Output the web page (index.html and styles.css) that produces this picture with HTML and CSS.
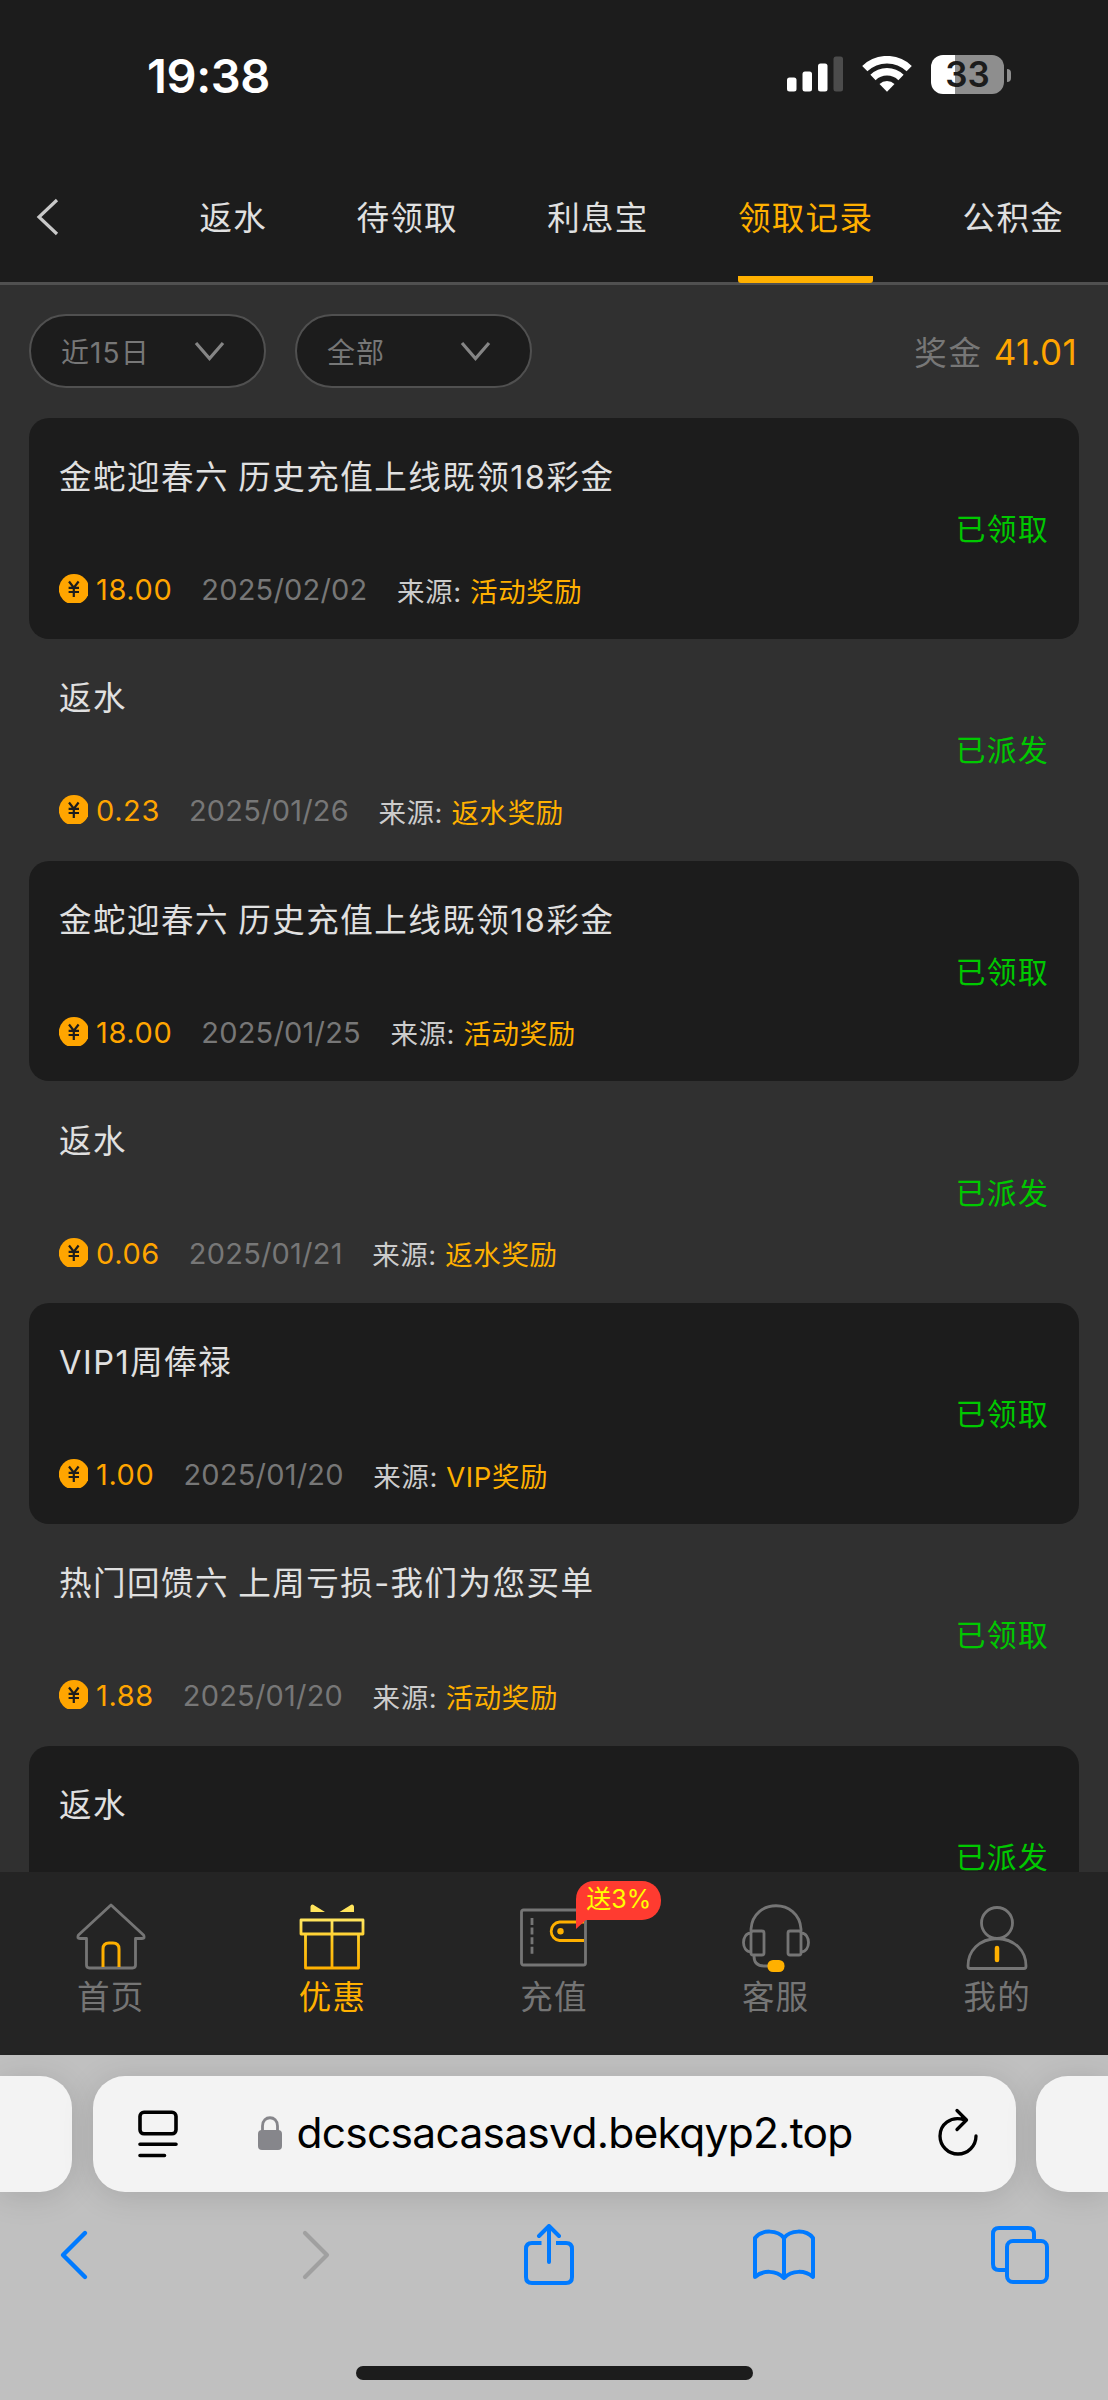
FILE: index.html
```html
<!DOCTYPE html>
<html lang="zh-CN">
<head>
<meta charset="utf-8">
<title>领取记录</title>
<link rel="stylesheet" href="styles.css">
</head>
<body>
<svg class="defs" width="0" height="0">
  <defs>
    <symbol id="coin" viewBox="0 0 29 29">
      <circle cx="15" cy="15.200" r="15.200" fill="#ffa500"/>
      <path d="M10 7.500l4.800 6.200L19.600 7.500M14.800 13.500v9.500M9.600 13.800h10.400M9.600 18h10.400" fill="none" stroke="#1c1c1c" stroke-width="2.200"/>
    </symbol>
    <linearGradient id="gold" x1="0" y1="0" x2="0" y2="68" gradientUnits="userSpaceOnUse">
      <stop offset=".3" stop-color="#ffe45c"/><stop offset=".6" stop-color="#ffc61a"/><stop offset="1" stop-color="#ffb000"/>
    </linearGradient>
  </defs>
</svg>

<header class="statusbar">
  <span class="clock">19:38</span>
  <div class="indicators">
    <svg width="58" height="36" viewBox="0 0 58 36">
      <g fill="#fff"><rect x="0" y="21.500" width="9.500" height="14" rx="2.500"/><rect x="15.500" y="15.500" width="9.500" height="20" rx="2.500"/><rect x="31" y="7.500" width="9.500" height="28" rx="2.500"/></g>
      <rect x="46.500" y="0.500" width="9.500" height="35" rx="2.500" fill="#4c4c4c"/>
    </svg>
    <svg class="wifi" width="50" height="36" viewBox="0 0 50 36">
      <g fill="none" stroke="#fff" stroke-width="7.500"><path d="M2.800 12.600A32 32 0 0 1 47.200 12.600"/><path d="M11 21.500A20 20 0 0 1 39 21.500"/></g>
      <path d="M17.500 28A11 11 0 0 1 32.500 28L25 35.800Z" fill="#fff"/>
    </svg>
    <div class="battery">33</div>
    <span class="battery-tip"></span>
  </div>
</header>

<nav class="tabs">
  <svg class="back" width="23" height="38" viewBox="0 0 23 38"><path d="M21 2L3 19l18 17" fill="none" stroke="#c8c8c8" stroke-width="3.200"/></svg>
  <span class="tab">返水</span>
  <span class="tab">待领取</span>
  <span class="tab">利息宝</span>
  <span class="tab active">领取记录</span>
  <span class="tab">公积金</span>
</nav>

<main class="records">
  <div class="filters">
    <div class="select"><span>近15日</span><svg width="31" height="21" viewBox="0 0 31 21"><path d="M2 2l13.500 15.500L29 2" fill="none" stroke="#858585" stroke-width="3.200"/></svg></div>
    <div class="select"><span>全部</span><svg width="31" height="21" viewBox="0 0 31 21"><path d="M2 2l13.500 15.500L29 2" fill="none" stroke="#858585" stroke-width="3.200"/></svg></div>
    <div class="total">奖金<b>41.01</b></div>
  </div>

  <article class="record dark">
    <h2>金蛇迎春六 历史充值上线既领18彩金</h2><span class="state">已领取</span>
    <div class="meta"><svg class="coin"><use href="#coin"/></svg><span class="amount">18.00</span><time>2025/02/02</time><span class="source">来源: <em>活动奖励</em></span></div>
  </article>
  <article class="record">
    <h2>返水</h2><span class="state">已派发</span>
    <div class="meta"><svg class="coin"><use href="#coin"/></svg><span class="amount">0.23</span><time>2025/01/26</time><span class="source">来源: <em>返水奖励</em></span></div>
  </article>
  <article class="record dark">
    <h2>金蛇迎春六 历史充值上线既领18彩金</h2><span class="state">已领取</span>
    <div class="meta"><svg class="coin"><use href="#coin"/></svg><span class="amount">18.00</span><time>2025/01/25</time><span class="source">来源: <em>活动奖励</em></span></div>
  </article>
  <article class="record">
    <h2>返水</h2><span class="state">已派发</span>
    <div class="meta"><svg class="coin"><use href="#coin"/></svg><span class="amount">0.06</span><time>2025/01/21</time><span class="source">来源: <em>返水奖励</em></span></div>
  </article>
  <article class="record dark">
    <h2>VIP1周俸禄</h2><span class="state">已领取</span>
    <div class="meta"><svg class="coin"><use href="#coin"/></svg><span class="amount">1.00</span><time>2025/01/20</time><span class="source">来源: <em>VIP奖励</em></span></div>
  </article>
  <article class="record">
    <h2>热门回馈六 上周亏损-我们为您买单</h2><span class="state">已领取</span>
    <div class="meta"><svg class="coin"><use href="#coin"/></svg><span class="amount">1.88</span><time>2025/01/20</time><span class="source">来源: <em>活动奖励</em></span></div>
  </article>
  <article class="record dark">
    <h2>返水</h2><span class="state">已派发</span>
  </article>
</main>

<nav class="dock">
  <div class="dock-item">
    <svg width="72" height="72" viewBox="0 0 72 72" fill="none" stroke="#757575" stroke-width="2.800" stroke-linejoin="round">
      <path d="M36 3L68.500 33Q70.500 36.500 67 36.500H60.500V63Q60.500 66 57.500 66H14.500Q11.500 66 11.500 63V36.500H5Q1.500 36.500 3.500 33Z"/>
      <path d="M28 65V47Q28 41 34 41H38Q44 41 44 47V65" stroke="#ffb000" stroke-width="3"/>
    </svg><span>首页</span>
  </div>
  <div class="dock-item active">
    <svg width="72" height="72" viewBox="0 0 72 72" fill="none" stroke="url(#gold)" stroke-width="2.800" stroke-linejoin="round">
      <path d="M5 18H67V32H5ZM9.500 32V66H62.500V32M36 18V66"/>
      <path d="M14.500 10V4.500Q15.500 1 18.500 3.500L29 10ZM58 10V4.500Q57 1 54 3.500L43.500 10Z" fill="#ffe45c" stroke="none"/>
    </svg><span>优惠</span>
  </div>
  <div class="dock-item">
    <svg width="72" height="72" viewBox="0 0 72 72" fill="none" stroke="#757575" stroke-width="2.800">
      <rect x="3.500" y="8" width="64" height="55" rx="2"/>
      <path d="M14 16v37" stroke-dasharray="7 2.600"/>
      <path d="M66 20H41.500A9.300 9.300 0 0 0 41.500 38.500H66" stroke="#ffb000"/><circle cx="42.500" cy="29.300" r="3.200" fill="#ffb000" stroke="none"/>
    </svg><span>充值</span><i class="promo">送3%</i>
  </div>
  <div class="dock-item">
    <svg width="72" height="72" viewBox="0 0 72 72" fill="none" stroke="#757575" stroke-width="2.800">
      <path d="M11 29V27C13-4 59-4 61 27V29"/>
      <rect x="11" y="29" width="13" height="24" rx="2"/><rect x="48" y="29" width="13" height="24" rx="2"/>
      <path d="M11 31C1 31 1 50 11 50M61 31C71 31 71 50 61 50M14 54Q14 64 24 64H29"/>
      <rect x="27.500" y="58" width="17" height="12" rx="5.500" fill="#ffb000" stroke="none"/>
    </svg><span>客服</span>
  </div>
  <div class="dock-item">
    <svg width="72" height="72" viewBox="0 0 72 72" fill="none" stroke="#757575" stroke-width="2.800">
      <circle cx="36" cy="21" r="15.500"/>
      <path d="M36 36.500C18 37 7 49 7 64Q7 66.500 9 66.500H63Q65 66.500 65 64C65 49 54 37 36 36.500Z"/>
      <path d="M36 46v12" stroke="#ffb000" stroke-width="4.500" stroke-linecap="round"/>
    </svg><span>我的</span>
  </div>
</nav>

<footer class="browser">
  <div class="addresses">
    <div class="side left"></div>
    <div class="address">
      <svg width="40" height="48" viewBox="0 0 40 48" fill="none" stroke="#000" stroke-width="3.600" stroke-linecap="round"><rect x="2" y="2.300" width="36" height="21.500" rx="4"/><path d="M2 34.300h36M2 45.500h24.500"/></svg>
      <svg class="lock" width="24" height="34" viewBox="0 0 24 34"><path d="M4.500 16V10C4.500-1 19.500-1 19.500 10V16" fill="none" stroke="#86868b" stroke-width="2.800"/><rect y="14" width="24" height="20" rx="4" fill="#86868b"/></svg>
      <span class="url">dcscsacasasvd.bekqyp2.top</span>
      <svg class="reload" width="40" height="48" viewBox="0 0 40 48" fill="none" stroke="#000" stroke-width="3.300" stroke-linecap="round" stroke-linejoin="round"><path d="M26.500 11.800C12 7.500 2 17 2 28A18 18 0 0 0 38 28M19 2.500l9.500 9.500-9.500 9.500"/></svg>
    </div>
    <div class="side right"></div>
  </div>
  <div class="tools">
    <svg width="30" height="52" viewBox="0 0 30 52"><path d="M26 4L4 26l22 22" fill="none" stroke="#007aff" stroke-width="4.400" stroke-linecap="round" stroke-linejoin="round"/></svg>
    <svg class="forward" width="30" height="52" viewBox="0 0 30 52"><path d="M4 4l22 22L4 48" fill="none" stroke="#a0a0a0" stroke-width="4.200" stroke-linecap="round" stroke-linejoin="round"/></svg>
    <svg class="share" width="50" height="62" viewBox="0 0 50 62" fill="none" stroke="#007aff" stroke-width="4" stroke-linecap="round" stroke-linejoin="round"><path d="M17.500 19H8Q2 19 2 25V53Q2 59 8 59H42Q48 59 48 53V25Q48 19 42 19H32" stroke-linecap="butt"/><path d="M25 38V2.500M15 12L25 2l10 10"/></svg>
    <svg class="book" width="62" height="52" viewBox="0 0 62 52" fill="none" stroke="#007aff" stroke-width="4" stroke-linecap="round" stroke-linejoin="round"><path d="M31 9C25 1 9 0 2 9V48C10 41 23 41 31 49C39 41 52 41 60 48V9C53 0 37 1 31 9V49"/></svg>
    <svg class="windows" width="58" height="58" viewBox="0 0 58 58" fill="none" stroke="#007aff" stroke-width="4"><rect x="16" y="15" width="40" height="41" rx="6"/><path d="M15 44H8Q2 44 2 38V8Q2 2 8 2H37Q43 2 43 8V14"/></svg>
  </div>
  <div class="home-bar"></div>
</footer>
</body>
</html>
```
FILE: styles.css
```css
* { box-sizing: border-box; }
body {
  margin: 0; width: 1108px; height: 2400px; overflow: hidden;
  display: flex; flex-direction: column;
  background: #303030; color: #e0e0e0;
  font-family: "Inter", "Noto Sans CJK SC", sans-serif;
  font-size: 32.500px; white-space: nowrap;
}
svg { display: block; flex: none; }
.defs { position: absolute; }

.statusbar {
  height: 150px; padding: 0 97px 0 147px; background: #1c1c1c; color: #fff;
  display: flex; justify-content: space-between;
}
.clock { font-size: 47px; font-weight: 600; line-height: 151px; letter-spacing: -.4px; }
.indicators { display: flex; padding-top: 56px; }
.wifi { margin-left: 17px; }
.battery {
  width: 73px; height: 39px; margin: -1px 0 0 19px; border-radius: 12px;
  background: linear-gradient(90deg, #fff 24px, #8e8e8e 24px);
  color: #1c1c1c; font-size: 35px; font-weight: 600; line-height: 39px; text-align: center;
}
.battery-tip { width: 4px; height: 13px; margin: 13px 0 0 3px; border-radius: 0 4px 4px 0; background: #8e8e8e; }

.tabs {
  height: 135px; padding: 0 44px 0 36px; background: #1c1c1c; border-bottom: 3px solid #505050;
  display: flex; justify-content: space-between;
}
.back { margin: 48px 51px 0 0; }
.tab { line-height: 138px; height: 132.500px; letter-spacing: 1.300px; }
.tab.active { color: #ffb000; border-bottom: 7px solid #ffb000; border-radius: 3px; }

.records { height: 1587px; padding: 29px 29px 0; overflow: hidden; background: #303030; }
.filters { display: flex; gap: 29px; height: 104px; }
.select {
  width: 237px; height: 74px; padding: 0 39px 0 30px; border: 2.500px solid #505050; border-radius: 37px;
  background: #1c1c1c; color: #777; font-size: 28px; letter-spacing: 1.100px;
  display: flex; align-items: center; justify-content: space-between;
}
.total { margin: 0 2px 0 auto; color: #777; line-height: 76px; letter-spacing: 1.800px; }
.total b { margin-left: 11px; color: #ffa500; font-size: 35px; font-weight: 400; letter-spacing: .3px; }

.record {
  height: 220.500px; margin-bottom: .8px; padding: 36px 30px 0; border-radius: 20px;
  display: grid; grid-template-rows: 46px 58px 62px; grid-template-columns: 1fr auto;
}
.record.dark { background: #1c1c1c; }
.record h2 { margin: 0; font-size: 32.500px; font-weight: 400; line-height: 47px; letter-spacing: 1.500px; word-spacing: -1.500px; }
.state { grid-column: 2; grid-row: 2; color: #00c800; font-size: 29.700px; line-height: 58px; letter-spacing: 1.400px; }
.meta { grid-column: 1; grid-row: 3; display: flex; align-items: center; height: 63px; font-size: 27.500px; }
.coin { width: 29px; height: 29px; margin-bottom: 2px; }
.amount { margin-left: 8px; color: #ffa500; font-size: 29px; letter-spacing: .6px; }
time { margin-left: 29px; color: #777; font-size: 29px; letter-spacing: .2px; }
.source { margin-left: 29.500px; color: #ccc; letter-spacing: .6px; }
.source em { color: #ffb000; font-style: normal; }

.dock { height: 183px; flex: none; background: #242424; display: grid; grid-template-columns: repeat(5, 1fr); }
.dock-item {
  position: relative; padding-top: 30px; color: #757575; letter-spacing: 1.200px;
  display: flex; flex-direction: column; align-items: center;
}
.dock-item span { line-height: 48px; }
.dock-item.active { color: #ffb000; }
.promo {
  position: absolute; left: 133px; top: 9px; width: 85px; height: 39px; border-radius: 18px 19px 19px 0;
  background: #ff3b30; color: #ff0; font-size: 25px; font-style: normal; line-height: 36px; text-align: center; letter-spacing: 0;
}
.promo::after {
  content: ""; position: absolute; left: 0; top: 38px; border-top: 10px solid #ff3b30; border-right: 11px solid transparent;
}

.browser { height: 345px; flex: none; background: #c0c0c0; padding-top: 20.500px; }
.addresses { display: flex; gap: 20.500px; height: 116px; }
.side, .address { background: #f3f3f3; box-shadow: 0 4px 32px rgba(0, 0, 0, .13); }
.side { width: 72px; }
.left { border-radius: 0 32px 32px 0; }
.right { border-radius: 32px 0 0 32px; }
.address { flex: 1; padding: 0 38px 0 45px; border-radius: 32px; display: flex; align-items: center; }
.lock { margin: -2px 0 0 80px; }
.url { margin: -2px 0 0 15px; color: #000; font-size: 42.500px; letter-spacing: -.730px; }
.reload { margin: -4px 0 0 auto; }
.tools { height: 126px; padding-left: 59px; display: flex; align-items: center; }
.forward { margin-left: 212px; }
.share { margin-left: 193px; }
.book { margin-left: 179px; }
.windows { margin-left: 176px; }
.home-bar { width: 397px; height: 14px; margin: 48px auto 0; border-radius: 7px; background: #1c1c1c; }
```
